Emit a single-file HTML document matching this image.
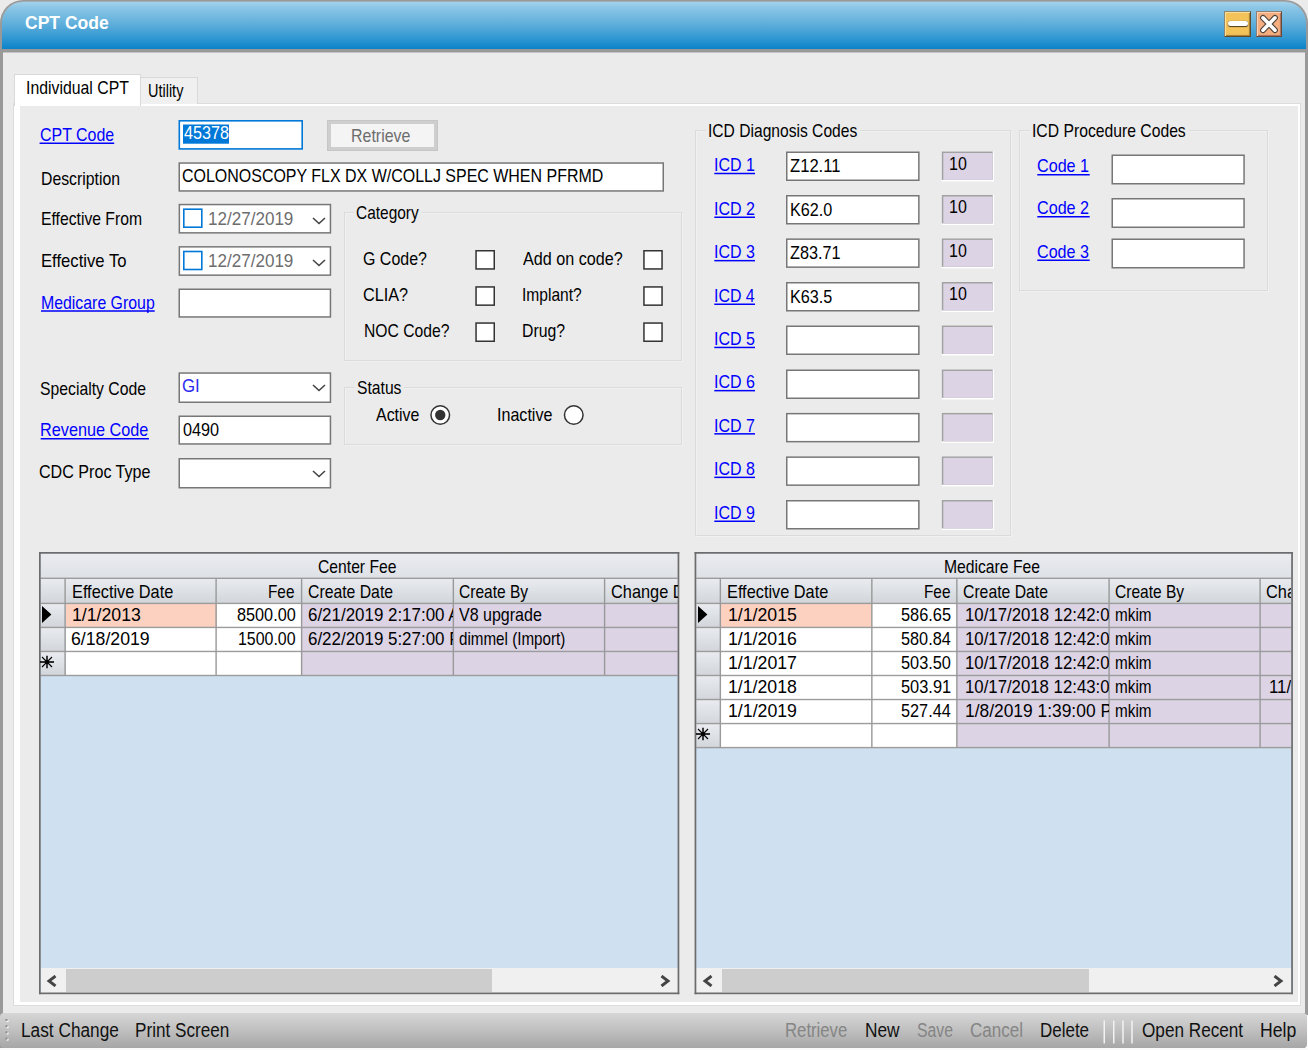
<!DOCTYPE html>
<html lang="en"><head><meta charset="utf-8"><title>CPT Code</title>
<style>
html,body{margin:0;padding:0;}
body{width:1308px;height:1050px;overflow:hidden;position:relative;background:#ebebeb;
font-family:"Liberation Sans",sans-serif;}
div{position:absolute;}
.t{position:absolute;white-space:pre;transform-origin:0 0;display:block;}
</style></head><body>
<div style="left:0px;top:0px;width:1308px;height:1050px;background:#999;border-radius:23px 23px 0 0;"></div>
<div style="left:2px;top:2px;width:1304px;height:47px;border-radius:21px 21px 0 0;background:linear-gradient(#a2d2ec 0%,#8cc6e6 12%,#5aacda 50%,#2c95d1 80%,#0a82c9 100%);box-shadow:0 -0.5px 0 #b0c4d0;"></div>
<div style="left:3px;top:52px;width:1302px;height:961px;background:#ebebeb;border-top:1px solid #c4c4c4;box-sizing:border-box;"></div>
<div style="left:1224px;top:11px;width:27px;height:26px;background:#f3c259;box-sizing:border-box;border:1px solid;border-color:#8d8674 #5f4b27 #5f4b27 #8d8674;box-shadow:inset 1px 1px 0.5px #f9df9a,inset -1px -1px 1px #a07c36;"><div style="left:3px;top:8.9px;width:19.5px;height:5px;background:#fff;border-radius:2.5px;box-shadow:0 1px 1px #4a3a1a,0 0 1px #6a5a3a;"></div></div>
<div style="left:1256px;top:11px;width:26px;height:26px;background:#f5ae7f;box-sizing:border-box;border:1px solid;border-color:#8d8078 #66493a #66493a #8d8078;box-shadow:inset 1px 1px 0.5px #fbd2b6,inset -1px -1px 1px #a8705a;"><svg width="26" height="26" viewBox="0 0 26 26" style="position:absolute;left:-1px;top:-1px"><path d="M7 6.8 L19 19.2 M19 6.8 L7 19.2" stroke="#4a4038" stroke-width="5.8" stroke-linecap="round"/><path d="M7 6.8 L19 19.2 M19 6.8 L7 19.2" stroke="#fff" stroke-width="3.6" stroke-linecap="round"/></svg></div>
<div style="left:14px;top:104px;width:1286px;height:901px;background:#fff;box-shadow:0 0 0 1px #dcdcdc;"></div>
<div style="left:20px;top:106px;width:1278px;height:896px;background:#ebebeb;"></div>
<div style="left:14px;top:74px;width:126.5px;height:32px;background:#fff;border:1px solid #d9d9d9;border-bottom:none;box-sizing:border-box;"></div>
<div style="left:140.5px;top:77px;width:57.5px;height:27px;background:#f0f0f0;border:1px solid #d9d9d9;border-left:none;border-bottom:none;box-sizing:border-box;"></div>
<div style="left:344px;top:212px;width:338px;height:149.4px;border:1px solid #dbdbdb;box-shadow:1px 1px 0 #f1f1f1, inset 1px 1px 0 #f1f1f1;box-sizing:border-box;"></div>
<div style="left:353.5px;top:210px;width:68.5px;height:5px;background:#ebebeb;"></div>
<div style="left:344px;top:387px;width:338px;height:58.4px;border:1px solid #dbdbdb;box-shadow:1px 1px 0 #f1f1f1, inset 1px 1px 0 #f1f1f1;box-sizing:border-box;"></div>
<div style="left:354.3px;top:385px;width:49.7px;height:5px;background:#ebebeb;"></div>
<div style="left:695px;top:130px;width:315.5px;height:406.4px;border:1px solid #dbdbdb;box-shadow:1px 1px 0 #f1f1f1, inset 1px 1px 0 #f1f1f1;box-sizing:border-box;"></div>
<div style="left:705.5px;top:128px;width:154.5px;height:5px;background:#ebebeb;"></div>
<div style="left:1019px;top:130px;width:248.5px;height:161.4px;border:1px solid #dbdbdb;box-shadow:1px 1px 0 #f1f1f1, inset 1px 1px 0 #f1f1f1;box-sizing:border-box;"></div>
<div style="left:1029.5px;top:128px;width:159px;height:5px;background:#ebebeb;"></div>
<div style="left:39px;top:552px;width:640.3px;height:442.2px;background:#cfe0f1;"></div>
<div style="left:40.7px;top:553.6px;width:636.9px;height:49.8px;background:linear-gradient(#e9ebef,#dfe2e7 45%,#d2d6db 100%);"></div>
<div style="left:40.7px;top:578.3px;width:636.9px;height:25.1px;background:linear-gradient(#e9ebef,#dfe2e7 45%,#d2d6db 100%);"></div>
<div style="left:40.7px;top:603.4px;width:24.8px;height:24.03px;background:linear-gradient(#e9ebef,#dfe2e7 45%,#d2d6db 100%);"></div>
<div style="left:40.7px;top:627.43px;width:24.8px;height:24.03px;background:linear-gradient(#e9ebef,#dfe2e7 45%,#d2d6db 100%);"></div>
<div style="left:40.7px;top:651.46px;width:24.8px;height:24.03px;background:linear-gradient(#e9ebef,#dfe2e7 45%,#d2d6db 100%);"></div>
<div style="left:65.5px;top:603.4px;width:236.5px;height:72.09px;background:#fff;"></div>
<div style="left:302px;top:603.4px;width:375.6px;height:72.09px;background:#dcd3e5;"></div>
<div style="left:65.5px;top:603.4px;width:151px;height:24.03px;background:#fdd1c0;"></div>
<div style="left:40.7px;top:968px;width:636.9px;height:24.5px;background:#f0f0f0;"></div>
<div style="left:66.2px;top:968.5px;width:425.8px;height:23.5px;background:#cdcdcd;"></div>
<div style="left:694.6px;top:552px;width:598.3px;height:442.2px;background:#cfe0f1;"></div>
<div style="left:696.3px;top:553.6px;width:594.9px;height:49.8px;background:linear-gradient(#e9ebef,#dfe2e7 45%,#d2d6db 100%);"></div>
<div style="left:696.3px;top:578.3px;width:594.9px;height:25.1px;background:linear-gradient(#e9ebef,#dfe2e7 45%,#d2d6db 100%);"></div>
<div style="left:696.3px;top:603.4px;width:24.45px;height:24.03px;background:linear-gradient(#e9ebef,#dfe2e7 45%,#d2d6db 100%);"></div>
<div style="left:696.3px;top:627.43px;width:24.45px;height:24.03px;background:linear-gradient(#e9ebef,#dfe2e7 45%,#d2d6db 100%);"></div>
<div style="left:696.3px;top:651.46px;width:24.45px;height:24.03px;background:linear-gradient(#e9ebef,#dfe2e7 45%,#d2d6db 100%);"></div>
<div style="left:696.3px;top:675.49px;width:24.45px;height:24.03px;background:linear-gradient(#e9ebef,#dfe2e7 45%,#d2d6db 100%);"></div>
<div style="left:696.3px;top:699.52px;width:24.45px;height:24.03px;background:linear-gradient(#e9ebef,#dfe2e7 45%,#d2d6db 100%);"></div>
<div style="left:696.3px;top:723.55px;width:24.45px;height:24.03px;background:linear-gradient(#e9ebef,#dfe2e7 45%,#d2d6db 100%);"></div>
<div style="left:720.75px;top:603.4px;width:236.5px;height:144.18px;background:#fff;"></div>
<div style="left:957.25px;top:603.4px;width:333.95px;height:144.18px;background:#dcd3e5;"></div>
<div style="left:720.75px;top:603.4px;width:151.5px;height:24.03px;background:#fdd1c0;"></div>
<div style="left:696.3px;top:968px;width:594.9px;height:24.5px;background:#f0f0f0;"></div>
<div style="left:721.8px;top:968.5px;width:367.2px;height:23.5px;background:#cdcdcd;"></div>
<div style="left:0px;top:1048px;width:1308px;height:2px;background:#fafafa;"></div>
<div style="left:1305px;top:1015px;width:3px;height:35px;background:#fafafa;"></div>
<div style="left:0px;top:1012.5px;width:1306.5px;height:35.5px;background:linear-gradient(#d6d6d6,#c4c4c4 40%,#a6a6a6 100%);border-radius:4px;"></div>
<svg style="position:absolute;left:0;top:0" width="1308" height="1050" viewBox="0 0 1308 1050">
<rect x="39.6" y="142.5" width="74.6" height="1.5" fill="#0000ff"/>
<rect x="178.5" y="120" width="124.5" height="29.7" fill="#0078d7"/>
<rect x="180.1" y="121.6" width="121.3" height="26.5" fill="#fff"/>
<rect x="183" y="124.5" width="46" height="19.2" fill="#0078d7"/>
<rect x="178.5" y="162.3" width="485.5" height="29.4" fill="#777"/>
<rect x="180" y="163.8" width="482.5" height="26.4" fill="#fff"/>
<rect x="178.6" y="203.8" width="152.6" height="29.8" fill="#777"/>
<rect x="180.1" y="205.3" width="149.6" height="26.8" fill="#fff"/>
<rect x="183" y="208.4" width="19.6" height="19.6" fill="#0078d7"/>
<rect x="184.6" y="210" width="16.4" height="16.4" fill="#fff"/>
<rect x="178.6" y="246.1" width="152.6" height="29.8" fill="#777"/>
<rect x="180.1" y="247.6" width="149.6" height="26.8" fill="#fff"/>
<rect x="183" y="250.7" width="19.6" height="19.6" fill="#0078d7"/>
<rect x="184.6" y="252.3" width="16.4" height="16.4" fill="#fff"/>
<rect x="41" y="310.25" width="113.7" height="1.5" fill="#0000ff"/>
<rect x="178.5" y="288.5" width="152.7" height="29.2" fill="#777"/>
<rect x="180" y="290" width="149.7" height="26.2" fill="#fff"/>
<rect x="178.5" y="372.3" width="152.7" height="30.7" fill="#777"/>
<rect x="180" y="373.8" width="149.7" height="27.7" fill="#fff"/>
<rect x="40.7" y="438" width="108.25" height="1.5" fill="#0000ff"/>
<rect x="178.5" y="415.5" width="152.7" height="29.2" fill="#777"/>
<rect x="180" y="417" width="149.7" height="26.2" fill="#fff"/>
<rect x="178.5" y="458" width="152.7" height="30.5" fill="#777"/>
<rect x="180" y="459.5" width="149.7" height="27.5" fill="#fff"/>
<rect x="475.3" y="250" width="19.7" height="19.7" fill="#333"/>
<rect x="476.8" y="251.5" width="16.7" height="16.7" fill="#fff"/>
<rect x="643.2" y="250" width="19.6" height="19.7" fill="#333"/>
<rect x="644.7" y="251.5" width="16.6" height="16.7" fill="#fff"/>
<rect x="475.3" y="286.2" width="19.7" height="19.7" fill="#333"/>
<rect x="476.8" y="287.7" width="16.7" height="16.7" fill="#fff"/>
<rect x="643.2" y="286.2" width="19.6" height="19.7" fill="#333"/>
<rect x="644.7" y="287.7" width="16.6" height="16.7" fill="#fff"/>
<rect x="475.3" y="322.3" width="19.7" height="19.7" fill="#333"/>
<rect x="476.8" y="323.8" width="16.7" height="16.7" fill="#fff"/>
<rect x="643.2" y="322.3" width="19.6" height="19.7" fill="#333"/>
<rect x="644.7" y="323.8" width="16.6" height="16.7" fill="#fff"/>
<circle cx="440.25" cy="415" r="9.3" fill="#fff" stroke="#333" stroke-width="1.5"/><circle cx="440.25" cy="415" r="5.2" fill="#333"/><circle cx="573.75" cy="415" r="9.3" fill="#fff" stroke="#333" stroke-width="1.5"/>
<rect x="714.3" y="172.75" width="40.7" height="1.5" fill="#0000ff"/>
<rect x="786" y="151.5" width="133.6" height="29.5" fill="#777"/>
<rect x="787.5" y="153" width="130.6" height="26.5" fill="#fff"/>
<rect x="941.8" y="151.5" width="52.2" height="30" fill="#fff"/>
<rect x="941.8" y="151.5" width="50.9" height="28.4" fill="#a2a2a2"/>
<rect x="943.3" y="153" width="49.4" height="26.9" fill="#dcd3e5"/>
<rect x="714.3" y="216.5" width="40.7" height="1.5" fill="#0000ff"/>
<rect x="786" y="195" width="133.6" height="29.5" fill="#777"/>
<rect x="787.5" y="196.5" width="130.6" height="26.5" fill="#fff"/>
<rect x="941.8" y="195" width="52.2" height="30" fill="#fff"/>
<rect x="941.8" y="195" width="50.9" height="28.4" fill="#a2a2a2"/>
<rect x="943.3" y="196.5" width="49.4" height="26.9" fill="#dcd3e5"/>
<rect x="714.3" y="259.9" width="40.7" height="1.5" fill="#0000ff"/>
<rect x="786" y="238.4" width="133.6" height="29.5" fill="#777"/>
<rect x="787.5" y="239.9" width="130.6" height="26.5" fill="#fff"/>
<rect x="941.8" y="238.4" width="52.2" height="30" fill="#fff"/>
<rect x="941.8" y="238.4" width="50.9" height="28.4" fill="#a2a2a2"/>
<rect x="943.3" y="239.9" width="49.4" height="26.9" fill="#dcd3e5"/>
<rect x="714.3" y="303.5" width="40.7" height="1.5" fill="#0000ff"/>
<rect x="786" y="282" width="133.6" height="29.5" fill="#777"/>
<rect x="787.5" y="283.5" width="130.6" height="26.5" fill="#fff"/>
<rect x="941.8" y="282" width="52.2" height="30" fill="#fff"/>
<rect x="941.8" y="282" width="50.9" height="28.4" fill="#a2a2a2"/>
<rect x="943.3" y="283.5" width="49.4" height="26.9" fill="#dcd3e5"/>
<rect x="714.3" y="346.7" width="40.7" height="1.5" fill="#0000ff"/>
<rect x="786" y="325.5" width="133.6" height="29.5" fill="#777"/>
<rect x="787.5" y="327" width="130.6" height="26.5" fill="#fff"/>
<rect x="941.8" y="325.5" width="52.2" height="30" fill="#fff"/>
<rect x="941.8" y="325.5" width="50.9" height="28.4" fill="#a2a2a2"/>
<rect x="943.3" y="327" width="49.4" height="26.9" fill="#dcd3e5"/>
<rect x="714.3" y="389.9" width="40.7" height="1.5" fill="#0000ff"/>
<rect x="786" y="369.5" width="133.6" height="29.5" fill="#777"/>
<rect x="787.5" y="371" width="130.6" height="26.5" fill="#fff"/>
<rect x="941.8" y="369.5" width="52.2" height="30" fill="#fff"/>
<rect x="941.8" y="369.5" width="50.9" height="28.4" fill="#a2a2a2"/>
<rect x="943.3" y="371" width="49.4" height="26.9" fill="#dcd3e5"/>
<rect x="714.3" y="433.1" width="40.7" height="1.5" fill="#0000ff"/>
<rect x="786" y="412.9" width="133.6" height="29.5" fill="#777"/>
<rect x="787.5" y="414.4" width="130.6" height="26.5" fill="#fff"/>
<rect x="941.8" y="412.9" width="52.2" height="30" fill="#fff"/>
<rect x="941.8" y="412.9" width="50.9" height="28.4" fill="#a2a2a2"/>
<rect x="943.3" y="414.4" width="49.4" height="26.9" fill="#dcd3e5"/>
<rect x="714.3" y="476.6" width="40.7" height="1.5" fill="#0000ff"/>
<rect x="786" y="456.4" width="133.6" height="29.5" fill="#777"/>
<rect x="787.5" y="457.9" width="130.6" height="26.5" fill="#fff"/>
<rect x="941.8" y="456.4" width="52.2" height="30" fill="#fff"/>
<rect x="941.8" y="456.4" width="50.9" height="28.4" fill="#a2a2a2"/>
<rect x="943.3" y="457.9" width="49.4" height="26.9" fill="#dcd3e5"/>
<rect x="714.3" y="520.5" width="40.7" height="1.5" fill="#0000ff"/>
<rect x="786" y="500" width="133.6" height="29.5" fill="#777"/>
<rect x="787.5" y="501.5" width="130.6" height="26.5" fill="#fff"/>
<rect x="941.8" y="500" width="52.2" height="30" fill="#fff"/>
<rect x="941.8" y="500" width="50.9" height="28.4" fill="#a2a2a2"/>
<rect x="943.3" y="501.5" width="49.4" height="26.9" fill="#dcd3e5"/>
<rect x="1037.3" y="174" width="52.4" height="1.5" fill="#0000ff"/>
<rect x="1111.5" y="154.5" width="133.3" height="30" fill="#777"/>
<rect x="1113" y="156" width="130.3" height="27" fill="#fff"/>
<rect x="1037.3" y="216" width="52.4" height="1.5" fill="#0000ff"/>
<rect x="1111.5" y="198" width="133.3" height="30" fill="#777"/>
<rect x="1113" y="199.5" width="130.3" height="27" fill="#fff"/>
<rect x="1037.3" y="259.5" width="52.4" height="1.5" fill="#0000ff"/>
<rect x="1111.5" y="238.5" width="133.3" height="30" fill="#777"/>
<rect x="1113" y="240" width="130.3" height="27" fill="#fff"/>
<rect x="40.7" y="577.6" width="636.9" height="1.4" fill="#9c9c9c"/>
<rect x="40.7" y="602.7" width="636.9" height="1.4" fill="#9c9c9c"/>
<rect x="40.7" y="626.73" width="636.9" height="1.4" fill="#9c9c9c"/>
<rect x="40.7" y="650.76" width="636.9" height="1.4" fill="#9c9c9c"/>
<rect x="40.7" y="674.79" width="636.9" height="1.4" fill="#9c9c9c"/>
<rect x="64.4" y="578.3" width="1.4" height="97.19" fill="#999"/>
<rect x="215.4" y="578.3" width="1.4" height="97.19" fill="#999"/>
<rect x="300.9" y="578.3" width="1.4" height="97.19" fill="#999"/>
<rect x="452.65" y="578.3" width="1.4" height="97.19" fill="#999"/>
<rect x="603.9" y="578.3" width="1.4" height="97.19" fill="#999"/>
<rect x="39" y="552" width="640.3" height="1.7" fill="#6c6c6c"/>
<rect x="39" y="992.5" width="640.3" height="1.7" fill="#6c6c6c"/>
<rect x="39" y="552" width="1.7" height="442.2" fill="#6c6c6c"/>
<rect x="677.6" y="552" width="1.7" height="442.2" fill="#6c6c6c"/>
<rect x="696.3" y="577.6" width="594.9" height="1.4" fill="#9c9c9c"/>
<rect x="696.3" y="602.7" width="594.9" height="1.4" fill="#9c9c9c"/>
<rect x="696.3" y="626.73" width="594.9" height="1.4" fill="#9c9c9c"/>
<rect x="696.3" y="650.76" width="594.9" height="1.4" fill="#9c9c9c"/>
<rect x="696.3" y="674.79" width="594.9" height="1.4" fill="#9c9c9c"/>
<rect x="696.3" y="698.82" width="594.9" height="1.4" fill="#9c9c9c"/>
<rect x="696.3" y="722.85" width="594.9" height="1.4" fill="#9c9c9c"/>
<rect x="696.3" y="746.88" width="594.9" height="1.4" fill="#9c9c9c"/>
<rect x="719.65" y="578.3" width="1.4" height="169.28" fill="#999"/>
<rect x="871.15" y="578.3" width="1.4" height="169.28" fill="#999"/>
<rect x="956.15" y="578.3" width="1.4" height="169.28" fill="#999"/>
<rect x="1108.4" y="578.3" width="1.4" height="169.28" fill="#999"/>
<rect x="1259.4" y="578.3" width="1.4" height="169.28" fill="#999"/>
<rect x="694.6" y="552" width="598.3" height="1.7" fill="#6c6c6c"/>
<rect x="694.6" y="992.5" width="598.3" height="1.7" fill="#6c6c6c"/>
<rect x="694.6" y="552" width="1.7" height="442.2" fill="#6c6c6c"/>
<rect x="1291.2" y="552" width="1.7" height="442.2" fill="#6c6c6c"/>
<rect x="6.5" y="1020" width="2" height="2" fill="#fff"/>
<rect x="5.5" y="1019" width="2" height="2" fill="#8e8e8e"/>
<rect x="6.5" y="1026.2" width="2" height="2" fill="#fff"/>
<rect x="5.5" y="1025.2" width="2" height="2" fill="#8e8e8e"/>
<rect x="6.5" y="1032.4" width="2" height="2" fill="#fff"/>
<rect x="5.5" y="1031.4" width="2" height="2" fill="#8e8e8e"/>
<rect x="6.5" y="1038.6" width="2" height="2" fill="#fff"/>
<rect x="5.5" y="1037.6" width="2" height="2" fill="#8e8e8e"/>
<rect x="1103.5" y="1020.5" width="1.5" height="23" fill="#f2f2f2"/>
<rect x="1113" y="1020.5" width="1.5" height="23" fill="#f2f2f2"/>
<rect x="1122.25" y="1020.5" width="1.5" height="23" fill="#f2f2f2"/>
<rect x="1131.25" y="1020.5" width="1.5" height="23" fill="#f2f2f2"/>
</svg>
<span class="t" style="left:25.40px;top:10.69px;font-size:18.5px;line-height:23px;color:#fff;transform:scaleX(0.9467);font-weight:bold;">CPT Code</span>
<span class="t" style="left:25.98px;top:76.42px;font-size:19px;line-height:23px;color:#000;transform:scaleX(0.8327);">Individual CPT</span>
<span class="t" style="left:147.81px;top:78.92px;font-size:19px;line-height:23px;color:#000;transform:scaleX(0.7617);">Utility</span>
<span class="t" style="left:39.70px;top:122.92px;font-size:19px;line-height:23px;color:#0000ff;transform:scaleX(0.8391);">CPT Code</span>
<span class="t" style="left:183.68px;top:121.42px;font-size:19px;line-height:23px;color:#fff;transform:scaleX(0.8495);">45378</span>
<div style="left:327px;top:120px;width:111px;height:31.4px;background:#f4f4f4;border:1px solid #c6c6c6;box-shadow:inset 0 0 0 3px #cecece;box-sizing:border-box;"></div>
<span class="t" style="left:350.92px;top:124.42px;font-size:19px;line-height:23px;color:#6d6d6d;transform:scaleX(0.8395);">Retrieve</span>
<span class="t" style="left:40.64px;top:166.92px;font-size:19px;line-height:23px;color:#000;transform:scaleX(0.8317);">Description</span>
<span class="t" style="left:182.40px;top:164.42px;font-size:19px;line-height:23px;color:#000;transform:scaleX(0.8407);">COLONOSCOPY FLX DX W/COLLJ SPEC WHEN PFRMD</span>
<span class="t" style="left:40.94px;top:206.92px;font-size:19px;line-height:23px;color:#000;transform:scaleX(0.8274);">Effective From</span>
<span class="t" style="left:208.12px;top:206.92px;font-size:19px;line-height:23px;color:#6d6d6d;transform:scaleX(0.8975);">12/27/2019</span>
<svg style="position:absolute;left:311.5px;top:216.6px" width="14" height="8" viewBox="0 0 14 8"><path d="M1 1 L7 6.5 L13 1" fill="none" stroke="#444" stroke-width="1.6"/></svg>
<span class="t" style="left:40.87px;top:248.92px;font-size:19px;line-height:23px;color:#000;transform:scaleX(0.8772);">Effective To</span>
<span class="t" style="left:208.12px;top:248.92px;font-size:19px;line-height:23px;color:#6d6d6d;transform:scaleX(0.8975);">12/27/2019</span>
<svg style="position:absolute;left:311.5px;top:258.9px" width="14" height="8" viewBox="0 0 14 8"><path d="M1 1 L7 6.5 L13 1" fill="none" stroke="#444" stroke-width="1.6"/></svg>
<span class="t" style="left:40.63px;top:290.67px;font-size:19px;line-height:23px;color:#0000ff;transform:scaleX(0.8346);">Medicare Group</span>
<span class="t" style="left:40.19px;top:376.92px;font-size:19px;line-height:23px;color:#000;transform:scaleX(0.8287);">Specialty Code</span>
<span class="t" style="left:182.36px;top:374.42px;font-size:19px;line-height:23px;color:#2a2aee;transform:scaleX(0.8867);">GI</span>
<svg style="position:absolute;left:311.5px;top:384px" width="14" height="8" viewBox="0 0 14 8"><path d="M1 1 L7 6.5 L13 1" fill="none" stroke="#444" stroke-width="1.6"/></svg>
<span class="t" style="left:40.30px;top:418.42px;font-size:19px;line-height:23px;color:#0000ff;transform:scaleX(0.8546);">Revenue Code</span>
<span class="t" style="left:183.13px;top:418.42px;font-size:19px;line-height:23px;color:#000;transform:scaleX(0.8548);">0490</span>
<span class="t" style="left:39.40px;top:460.17px;font-size:19px;line-height:23px;color:#000;transform:scaleX(0.8470);">CDC Proc Type</span>
<svg style="position:absolute;left:311.5px;top:470px" width="14" height="8" viewBox="0 0 14 8"><path d="M1 1 L7 6.5 L13 1" fill="none" stroke="#444" stroke-width="1.6"/></svg>
<span class="t" style="left:355.93px;top:201.42px;font-size:19px;line-height:23px;color:#000;transform:scaleX(0.8138);">Category</span>
<span class="t" style="left:363.40px;top:247.42px;font-size:19px;line-height:23px;color:#000;transform:scaleX(0.8402);">G Code?</span>
<span class="t" style="left:522.50px;top:247.42px;font-size:19px;line-height:23px;color:#000;transform:scaleX(0.8510);">Add on code?</span>
<span class="t" style="left:363.39px;top:283.42px;font-size:19px;line-height:23px;color:#000;transform:scaleX(0.8544);">CLIA?</span>
<span class="t" style="left:522.00px;top:283.42px;font-size:19px;line-height:23px;color:#000;transform:scaleX(0.8200);">Implant?</span>
<span class="t" style="left:364.35px;top:319.17px;font-size:19px;line-height:23px;color:#000;transform:scaleX(0.8255);">NOC Code?</span>
<span class="t" style="left:522.13px;top:319.17px;font-size:19px;line-height:23px;color:#000;transform:scaleX(0.8328);">Drug?</span>
<span class="t" style="left:356.79px;top:376.42px;font-size:19px;line-height:23px;color:#000;transform:scaleX(0.8253);">Status</span>
<span class="t" style="left:375.50px;top:403.42px;font-size:19px;line-height:23px;color:#000;transform:scaleX(0.8386);">Active</span>
<span class="t" style="left:496.95px;top:403.42px;font-size:19px;line-height:23px;color:#000;transform:scaleX(0.8462);">Inactive</span>
<span class="t" style="left:707.99px;top:118.92px;font-size:19px;line-height:23px;color:#000;transform:scaleX(0.8217);">ICD Diagnosis Codes</span>
<span class="t" style="left:713.76px;top:153.17px;font-size:19px;line-height:23px;color:#0000ff;transform:scaleX(0.8438);">ICD 1</span>
<span class="t" style="left:790.20px;top:154.42px;font-size:19px;line-height:23px;color:#000;transform:scaleX(0.8742);">Z12.11</span>
<span class="t" style="left:948.70px;top:151.82px;font-size:19px;line-height:23px;color:#000;transform:scaleX(0.8421);">10</span>
<span class="t" style="left:713.76px;top:196.92px;font-size:19px;line-height:23px;color:#0000ff;transform:scaleX(0.8438);">ICD 2</span>
<span class="t" style="left:790.11px;top:197.92px;font-size:19px;line-height:23px;color:#000;transform:scaleX(0.8501);">K62.0</span>
<span class="t" style="left:948.70px;top:195.32px;font-size:19px;line-height:23px;color:#000;transform:scaleX(0.8421);">10</span>
<span class="t" style="left:713.76px;top:240.32px;font-size:19px;line-height:23px;color:#0000ff;transform:scaleX(0.8421);">ICD 3</span>
<span class="t" style="left:790.21px;top:241.32px;font-size:19px;line-height:23px;color:#000;transform:scaleX(0.8541);">Z83.71</span>
<span class="t" style="left:948.70px;top:238.72px;font-size:19px;line-height:23px;color:#000;transform:scaleX(0.8421);">10</span>
<span class="t" style="left:713.77px;top:283.92px;font-size:19px;line-height:23px;color:#0000ff;transform:scaleX(0.8369);">ICD 4</span>
<span class="t" style="left:790.11px;top:284.92px;font-size:19px;line-height:23px;color:#000;transform:scaleX(0.8518);">K63.5</span>
<span class="t" style="left:948.70px;top:282.32px;font-size:19px;line-height:23px;color:#000;transform:scaleX(0.8421);">10</span>
<span class="t" style="left:713.76px;top:327.12px;font-size:19px;line-height:23px;color:#0000ff;transform:scaleX(0.8421);">ICD 5</span>
<span class="t" style="left:713.76px;top:370.32px;font-size:19px;line-height:23px;color:#0000ff;transform:scaleX(0.8421);">ICD 6</span>
<span class="t" style="left:713.76px;top:413.52px;font-size:19px;line-height:23px;color:#0000ff;transform:scaleX(0.8438);">ICD 7</span>
<span class="t" style="left:713.76px;top:457.02px;font-size:19px;line-height:23px;color:#0000ff;transform:scaleX(0.8421);">ICD 8</span>
<span class="t" style="left:713.76px;top:500.92px;font-size:19px;line-height:23px;color:#0000ff;transform:scaleX(0.8438);">ICD 9</span>
<span class="t" style="left:1031.99px;top:118.92px;font-size:19px;line-height:23px;color:#000;transform:scaleX(0.8271);">ICD Procedure Codes</span>
<span class="t" style="left:1037.39px;top:154.42px;font-size:19px;line-height:23px;color:#0000ff;transform:scaleX(0.8492);">Code 1</span>
<span class="t" style="left:1037.39px;top:196.42px;font-size:19px;line-height:23px;color:#0000ff;transform:scaleX(0.8492);">Code 2</span>
<span class="t" style="left:1037.39px;top:239.92px;font-size:19px;line-height:23px;color:#0000ff;transform:scaleX(0.8478);">Code 3</span>
<span class="t" style="left:318.42px;top:555.17px;font-size:19px;line-height:23px;color:#000;transform:scaleX(0.8254);">Center Fee</span>
<span class="t" style="left:71.59px;top:580.17px;font-size:19px;line-height:23px;color:#000;transform:scaleX(0.8589);">Effective Date</span>
<span class="t" style="left:268.42px;top:580.17px;font-size:19px;line-height:23px;color:#000;transform:scaleX(0.8076);">Fee</span>
<span class="t" style="left:307.71px;top:580.17px;font-size:19px;line-height:23px;color:#000;transform:scaleX(0.8302);">Create Date</span>
<span class="t" style="left:458.92px;top:580.17px;font-size:19px;line-height:23px;color:#000;transform:scaleX(0.8173);">Create By</span>
<div style="left:605px;top:580.17px;width:72.6px;height:23px;overflow:hidden;"><span class="t" style="left:5.63px;top:0.00px;font-size:19px;line-height:23px;color:#000;transform:scaleX(0.8605);">Change Date</span></div>
<svg style="position:absolute;left:41.9px;top:605.9px" width="10" height="17" viewBox="0 0 10 17"><path d="M0 0 L9.4 8.5 L0 17 Z" fill="#000"/></svg>
<svg style="position:absolute;left:40.1px;top:654.96px" width="14" height="14" viewBox="0 0 14 14"><path d="M7 0.7 V13.3" stroke="#000" stroke-width="1.5" fill="none"/><path d="M0 7 H14" stroke="#000" stroke-width="1.6" fill="none"/><path d="M2 2 L12 12 M12 2 L2 12" stroke="#000" stroke-width="1.1" fill="none"/><circle cx="7" cy="7" r="2" fill="#000"/></svg>
<span class="t" style="left:72.07px;top:603.32px;font-size:19px;line-height:23px;color:#000;transform:scaleX(0.9313);">1/1/2013</span>
<span class="t" style="left:236.55px;top:603.32px;font-size:19px;line-height:23px;color:#000;transform:scaleX(0.8549);">8500.00</span>
<div style="left:302px;top:603.32px;width:150.9px;height:23px;overflow:hidden;"><span class="t" style="left:6.15px;top:0.00px;font-size:19px;line-height:23px;color:#000;transform:scaleX(0.8909);">6/21/2019 2:17:00 AM</span></div>
<span class="t" style="left:459.00px;top:603.32px;font-size:19px;line-height:23px;color:#000;transform:scaleX(0.8433);">V8 upgrade</span>
<span class="t" style="left:71.32px;top:627.35px;font-size:19px;line-height:23px;color:#000;transform:scaleX(0.9306);">6/18/2019</span>
<span class="t" style="left:237.71px;top:627.35px;font-size:19px;line-height:23px;color:#000;transform:scaleX(0.8379);">1500.00</span>
<div style="left:302px;top:627.35px;width:150.9px;height:23px;overflow:hidden;"><span class="t" style="left:6.15px;top:0.00px;font-size:19px;line-height:23px;color:#000;transform:scaleX(0.8909);">6/22/2019 5:27:00 PM</span></div>
<span class="t" style="left:459.29px;top:627.35px;font-size:19px;line-height:23px;color:#000;transform:scaleX(0.7988);">dimmel (Import)</span>
<svg style="position:absolute;left:46.2px;top:974.5px" width="12" height="12" viewBox="0 0 12 12"><path d="M9.5 1 L3 6 L9.5 11" fill="none" stroke="#444" stroke-width="2.9"/></svg>
<svg style="position:absolute;left:658.6px;top:974.5px" width="12" height="12" viewBox="0 0 12 12"><path d="M2.5 1 L9 6 L2.5 11" fill="none" stroke="#444" stroke-width="2.9"/></svg>
<span class="t" style="left:944.14px;top:555.17px;font-size:19px;line-height:23px;color:#000;transform:scaleX(0.8257);">Medicare Fee</span>
<span class="t" style="left:727.34px;top:580.17px;font-size:19px;line-height:23px;color:#000;transform:scaleX(0.8589);">Effective Date</span>
<span class="t" style="left:924.17px;top:580.17px;font-size:19px;line-height:23px;color:#000;transform:scaleX(0.8076);">Fee</span>
<span class="t" style="left:963.41px;top:580.17px;font-size:19px;line-height:23px;color:#000;transform:scaleX(0.8292);">Create Date</span>
<span class="t" style="left:1114.67px;top:580.17px;font-size:19px;line-height:23px;color:#000;transform:scaleX(0.8173);">Create By</span>
<div style="left:1260.5px;top:580.17px;width:30.7px;height:23px;overflow:hidden;"><span class="t" style="left:5.63px;top:0.00px;font-size:19px;line-height:23px;color:#000;transform:scaleX(0.8605);">Change Date</span></div>
<svg style="position:absolute;left:697.5px;top:605.9px" width="10" height="17" viewBox="0 0 10 17"><path d="M0 0 L9.4 8.5 L0 17 Z" fill="#000"/></svg>
<svg style="position:absolute;left:695.7px;top:727.05px" width="14" height="14" viewBox="0 0 14 14"><path d="M7 0.7 V13.3" stroke="#000" stroke-width="1.5" fill="none"/><path d="M0 7 H14" stroke="#000" stroke-width="1.6" fill="none"/><path d="M2 2 L12 12 M12 2 L2 12" stroke="#000" stroke-width="1.1" fill="none"/><circle cx="7" cy="7" r="2" fill="#000"/></svg>
<span class="t" style="left:728.07px;top:603.32px;font-size:19px;line-height:23px;color:#000;transform:scaleX(0.9313);">1/1/2015</span>
<span class="t" style="left:901.05px;top:603.32px;font-size:19px;line-height:23px;color:#000;transform:scaleX(0.8610);">586.65</span>
<div style="left:957.25px;top:603.32px;width:151.35px;height:23px;overflow:hidden;"><span class="t" style="left:8.19px;top:0.00px;font-size:19px;line-height:23px;color:#000;transform:scaleX(0.8830);">10/17/2018 12:42:00 PM</span></div>
<span class="t" style="left:1115.16px;top:603.32px;font-size:19px;line-height:23px;color:#000;transform:scaleX(0.8046);">mkim</span>
<span class="t" style="left:728.07px;top:627.35px;font-size:19px;line-height:23px;color:#000;transform:scaleX(0.9313);">1/1/2016</span>
<span class="t" style="left:901.05px;top:627.35px;font-size:19px;line-height:23px;color:#000;transform:scaleX(0.8567);">580.84</span>
<div style="left:957.25px;top:627.35px;width:151.35px;height:23px;overflow:hidden;"><span class="t" style="left:8.19px;top:0.00px;font-size:19px;line-height:23px;color:#000;transform:scaleX(0.8830);">10/17/2018 12:42:00 PM</span></div>
<span class="t" style="left:1115.16px;top:627.35px;font-size:19px;line-height:23px;color:#000;transform:scaleX(0.8046);">mkim</span>
<span class="t" style="left:728.07px;top:651.38px;font-size:19px;line-height:23px;color:#000;transform:scaleX(0.9326);">1/1/2017</span>
<span class="t" style="left:901.05px;top:651.38px;font-size:19px;line-height:23px;color:#000;transform:scaleX(0.8596);">503.50</span>
<div style="left:957.25px;top:651.38px;width:151.35px;height:23px;overflow:hidden;"><span class="t" style="left:8.19px;top:0.00px;font-size:19px;line-height:23px;color:#000;transform:scaleX(0.8830);">10/17/2018 12:42:00 PM</span></div>
<span class="t" style="left:1115.16px;top:651.38px;font-size:19px;line-height:23px;color:#000;transform:scaleX(0.8046);">mkim</span>
<span class="t" style="left:728.07px;top:675.41px;font-size:19px;line-height:23px;color:#000;transform:scaleX(0.9313);">1/1/2018</span>
<span class="t" style="left:901.04px;top:675.41px;font-size:19px;line-height:23px;color:#000;transform:scaleX(0.8625);">503.91</span>
<div style="left:957.25px;top:675.41px;width:151.35px;height:23px;overflow:hidden;"><span class="t" style="left:8.19px;top:0.00px;font-size:19px;line-height:23px;color:#000;transform:scaleX(0.8825);">10/17/2018 12:43:00 PM</span></div>
<span class="t" style="left:1115.16px;top:675.41px;font-size:19px;line-height:23px;color:#000;transform:scaleX(0.8046);">mkim</span>
<div style="left:1260.5px;top:675.41px;width:30.7px;height:23px;overflow:hidden;"><span class="t" style="left:8.54px;top:0.00px;font-size:19px;line-height:23px;color:#000;transform:scaleX(0.8835);">11/5/2018</span></div>
<span class="t" style="left:728.07px;top:699.44px;font-size:19px;line-height:23px;color:#000;transform:scaleX(0.9326);">1/1/2019</span>
<span class="t" style="left:901.05px;top:699.44px;font-size:19px;line-height:23px;color:#000;transform:scaleX(0.8567);">527.44</span>
<div style="left:957.25px;top:699.44px;width:151.35px;height:23px;overflow:hidden;"><span class="t" style="left:8.05px;top:0.00px;font-size:19px;line-height:23px;color:#000;transform:scaleX(0.9153);">1/8/2019 1:39:00 PM</span></div>
<span class="t" style="left:1115.16px;top:699.44px;font-size:19px;line-height:23px;color:#000;transform:scaleX(0.8046);">mkim</span>
<svg style="position:absolute;left:701.8px;top:974.5px" width="12" height="12" viewBox="0 0 12 12"><path d="M9.5 1 L3 6 L9.5 11" fill="none" stroke="#444" stroke-width="2.9"/></svg>
<svg style="position:absolute;left:1272.2px;top:974.5px" width="12" height="12" viewBox="0 0 12 12"><path d="M2.5 1 L9 6 L2.5 11" fill="none" stroke="#444" stroke-width="2.9"/></svg>
<span class="t" style="left:21.02px;top:1017.54px;font-size:19.5px;line-height:24px;color:#111;transform:scaleX(0.8852);">Last Change</span>
<span class="t" style="left:135.03px;top:1017.54px;font-size:19.5px;line-height:24px;color:#111;transform:scaleX(0.8783);">Print Screen</span>
<span class="t" style="left:785.06px;top:1017.54px;font-size:19.5px;line-height:24px;color:#858585;transform:scaleX(0.8578);">Retrieve</span>
<span class="t" style="left:864.52px;top:1017.54px;font-size:19.5px;line-height:24px;color:#111;transform:scaleX(0.8871);">New</span>
<span class="t" style="left:916.79px;top:1017.54px;font-size:19.5px;line-height:24px;color:#858585;transform:scaleX(0.8107);">Save</span>
<span class="t" style="left:969.85px;top:1017.54px;font-size:19.5px;line-height:24px;color:#858585;transform:scaleX(0.8718);">Cancel</span>
<span class="t" style="left:1040.04px;top:1017.54px;font-size:19.5px;line-height:24px;color:#111;transform:scaleX(0.8701);">Delete</span>
<span class="t" style="left:1141.93px;top:1017.54px;font-size:19.5px;line-height:24px;color:#111;transform:scaleX(0.8800);">Open Recent</span>
<span class="t" style="left:1260.49px;top:1017.54px;font-size:19.5px;line-height:24px;color:#111;transform:scaleX(0.9037);">Help</span>
</body></html>
